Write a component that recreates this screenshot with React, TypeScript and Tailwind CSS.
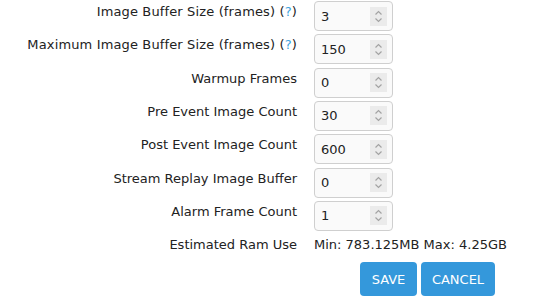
import { ReactNode } from 'react';

type Row = { label: ReactNode; value: string };

const Help = () => (
  <>
    {' '}(<span className="text-[#3ba3dd]">?</span>)
  </>
);

const rows: Row[] = [
  { label: <span className="tracking-[0.14px]">Image Buffer Size (frames)<Help /></span>, value: '3' },
  { label: <span className="tracking-[0.14px]">Maximum Image Buffer Size (frames)<Help /></span>, value: '150' },
  { label: 'Warmup Frames', value: '0' },
  { label: 'Pre Event Image Count', value: '30' },
  { label: 'Post Event Image Count', value: '600' },
  { label: 'Stream Replay Image Buffer', value: '0' },
  { label: 'Alarm Frame Count', value: '1' },
];

// number box with the little up/down spinner on the right
function NumberBox({ value }: { value: string }) {
  return (
    <div className="flex h-[30px] w-[79px] items-center justify-between rounded-[4px] border border-[#cfcfcf] bg-[#fafafa] pl-[6px] pr-[5px]">
      <span className="pt-[1px] text-[#222]">{value}</span>
      <span className="flex h-[19px] w-[17px] items-center justify-center bg-[#ebebeb]">
        <svg width="9" height="13" viewBox="0 0 9 13" fill="none" stroke="#a3a3a3" strokeWidth="1.2">
          <path d="M1.5 4.5 L4.5 1.5 L7.5 4.5" />
          <path d="M1.5 8.5 L4.5 11.5 L7.5 8.5" />
        </svg>
      </span>
    </div>
  );
}

export default function App() {
  return (
    <div className="min-h-screen bg-white pt-[1px] text-[13px] leading-[16px] text-[#222]" style={{ fontFamily: '"DejaVu Sans", Verdana, sans-serif' }}>
      <div className="grid grid-cols-[297px_auto] gap-x-[17px]">
        {rows.map((r, i) => (
          <div key={i} className="contents">
            <div className="pt-[3px] text-right">{r.label}</div>
            <div className="pb-[3.33px]">
              <NumberBox value={r.value} />
            </div>
          </div>
        ))}
        <div className="pt-[3px] text-right">Estimated Ram Use</div>
        <div className="pt-[3px]">Min: 783.125MB Max: 4.25GB</div>

        <div />
        <div className="ml-[46px] mt-[9px] flex gap-[4px]">
          <button className="h-[34px] w-[57px] rounded-[4px] bg-[#3498db] pt-[2px] text-center text-white">SAVE</button>
          <button className="h-[34px] w-[74px] rounded-[4px] bg-[#3498db] pt-[2px] text-center text-white">CANCEL</button>
        </div>
      </div>
    </div>
  );
}
